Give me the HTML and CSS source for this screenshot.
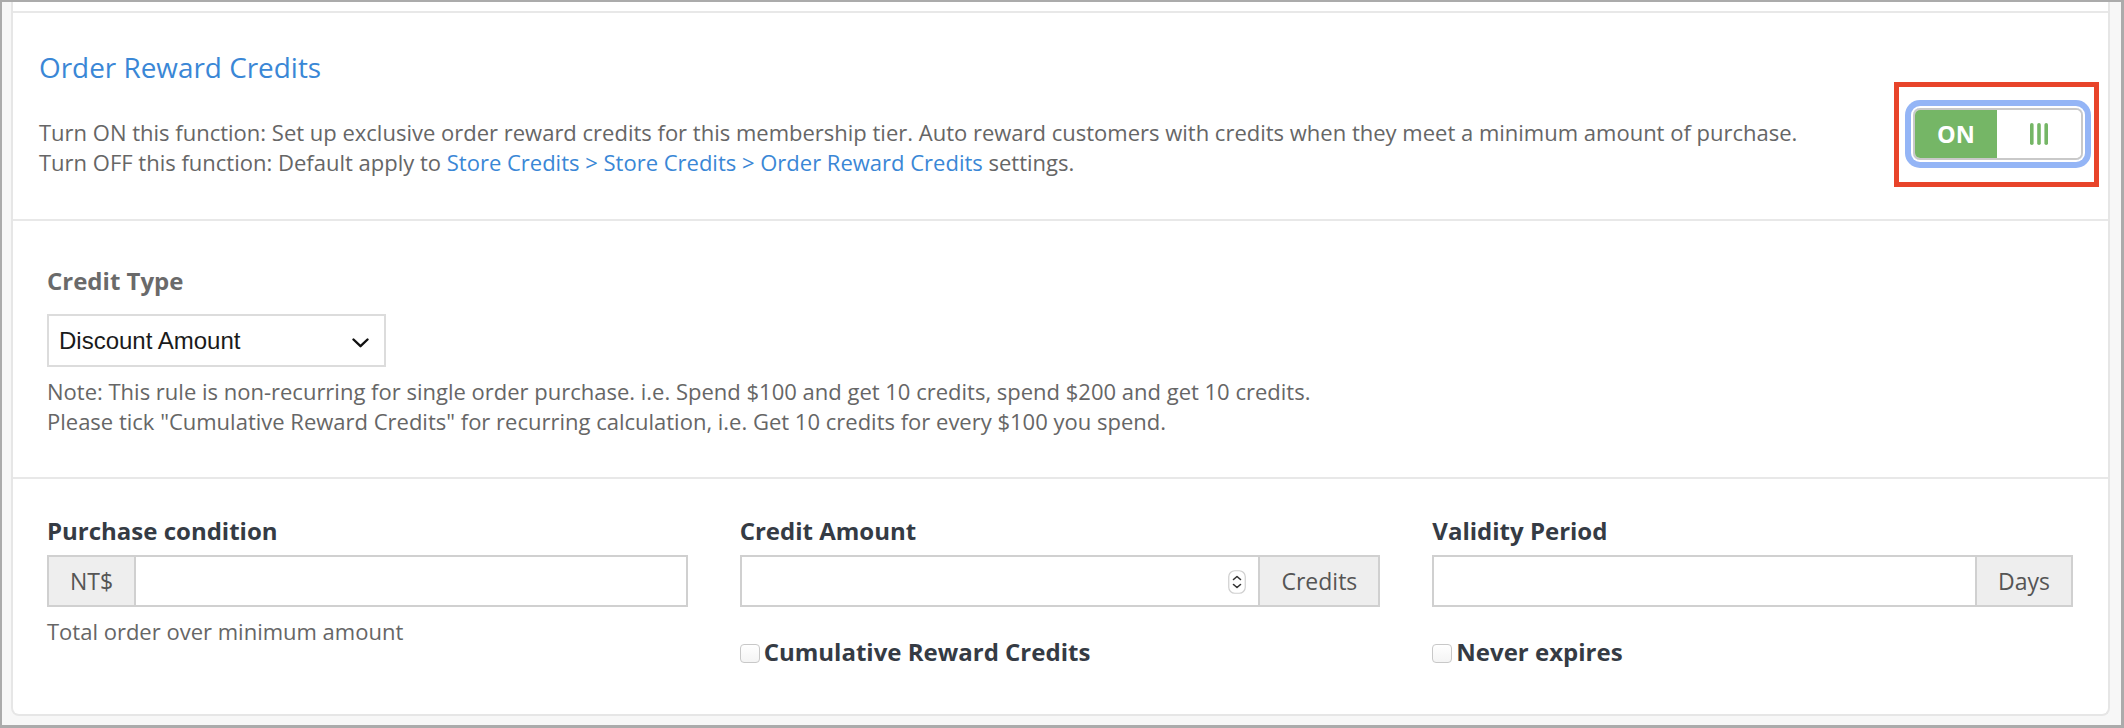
FILE: index.html
```html
<!DOCTYPE html>
<html lang="en">
<head>
<meta charset="utf-8">
<title>Order Reward Credits</title>
<link rel="stylesheet" href="styles.css">
</head>
<body>
<div class="frame">
  <div class="card">
    <section class="sec sec-head">
      <div class="head-text">
        <h2 class="title">Order Reward Credits</h2>
        <p class="desc">Turn ON this function: Set up exclusive order reward credits for this membership tier. Auto reward customers with credits when they meet a minimum amount of purchase.<br>Turn OFF this function: Default apply to <a class="link" href="#">Store Credits &gt; Store Credits &gt; Order Reward Credits</a> settings.</p>
      </div>
      <div class="highlight">
        <div class="toggle">
          <span class="toggle-on">ON</span>
          <span class="toggle-handle">
            <svg class="grip" width="18" height="22" viewBox="0 0 18 22"><rect x="0" y="0" width="3.6" height="22" rx="1.8" fill="#75b666"/><rect x="7.2" y="0" width="3.6" height="22" rx="1.8" fill="#75b666"/><rect x="14.4" y="0" width="3.6" height="22" rx="1.8" fill="#75b666"/></svg>
          </span>
        </div>
      </div>
    </section>

    <section class="sec sec-type">
      <div class="label label-muted">Credit Type</div>
      <div class="select">
        <span class="select-text">Discount Amount</span>
        <svg class="chevron" width="17" height="10" viewBox="0 0 17 10"><path d="M1.5 1.5 L8.5 8.2 L15.5 1.5" fill="none" stroke="#111" stroke-width="2.4" stroke-linecap="round" stroke-linejoin="round"/></svg>
      </div>
      <p class="note">Note: This rule is non-recurring for single order purchase. i.e. Spend $100 and get 10 credits, spend $200 and get 10 credits.<br>Please tick "Cumulative Reward Credits" for recurring calculation, i.e. Get 10 credits for every $100 you spend.</p>
    </section>

    <section class="sec sec-fields">
      <div class="field">
        <div class="label">Purchase condition</div>
        <div class="input-group">
          <span class="addon addon-left">NT$</span>
          <div class="field-box"><input class="input" type="text"></div>
        </div>
        <p class="help">Total order over minimum amount</p>
      </div>
      <div class="field">
        <div class="label">Credit Amount</div>
        <div class="input-group">
          <div class="field-box">
            <input class="input" type="text">
            <svg class="spinner" width="18" height="24" viewBox="0 0 18 24"><rect x="0.75" y="0.75" width="16.5" height="22.5" rx="6" fill="#fff" stroke="#cfcfcf" stroke-width="1.2"/><path d="M5.5 9.5 L9 6.5 L12.5 9.5" fill="none" stroke="#333" stroke-width="1.6" stroke-linecap="round" stroke-linejoin="round"/><path d="M5.5 14.5 L9 17.5 L12.5 14.5" fill="none" stroke="#333" stroke-width="1.6" stroke-linecap="round" stroke-linejoin="round"/></svg>
          </div>
          <span class="addon addon-right">Credits</span>
        </div>
        <label class="check"><input class="checkbox" type="checkbox"><span>Cumulative Reward Credits</span></label>
      </div>
      <div class="field">
        <div class="label">Validity Period</div>
        <div class="input-group">
          <div class="field-box"><input class="input" type="text"></div>
          <span class="addon addon-right">Days</span>
        </div>
        <label class="check"><input class="checkbox" type="checkbox"><span>Never expires</span></label>
      </div>
    </section>
  </div>
</div>
</body>
</html>
```

FILE: styles.css
```css
html, body {
  margin: 0;
  padding: 0;
}

body {
  width: 2124px;
  height: 728px;
  overflow: hidden;
  font-family: "Open Sans", "Noto Sans", sans-serif;
  color: #666;
  background: #f7f7f7;
}

.frame {
  box-sizing: border-box;
  width: 2124px;
  height: 728px;
  border-style: solid;
  border-color: #ababab;
  border-width: 2px 3px 3px 2px;
  background: #f7f7f7;
  padding: 0 11px 9px 9px;
}

.card {
  box-sizing: border-box;
  height: 100%;
  background: #fff;
  border: 2px solid #e6e6e6;
  border-top: 0;
  border-radius: 0 0 8px 8px;
  padding-top: 9px;
}

.sec {
  border-bottom: 2px solid #e8e8e8;
}

/* ---------- header section ---------- */
.sec-head {
  display: flex;
  align-items: flex-start;
  border-top: 2px solid #e8e8e8;
  padding: 38px 9px 0 26px;
}

.head-text {
  flex: 1;
  padding-bottom: 42.5px;
}

.title {
  margin: 0;
  font-size: 27.9px;
  font-weight: 400;
  line-height: 32px;
  color: #3a87d6;
}

.desc {
  margin: 33.5px 0 0;
  font-size: 22px;
  line-height: 30px;
  color: #666;
}

.link {
  color: #3a87d6;
  text-decoration: none;
}

.highlight {
  margin-top: 31px;
  border: 5px solid #e8442a;
  padding: 21px 11px 22px 14px;
}

.toggle {
  box-sizing: border-box;
  display: flex;
  width: 170px;
  height: 52px;
  border: 2px solid #c9c9c9;
  border-radius: 7px;
  overflow: hidden;
  box-shadow: 0 0 0 2px #fff, 0 0 0 8px #94b5f6;
}

.toggle-on {
  width: 82px;
  display: flex;
  align-items: center;
  justify-content: center;
  background: #75b666;
  color: #fff;
  font-size: 23.5px;
  font-weight: 700;
}

.toggle-handle {
  flex: 1;
  display: flex;
  align-items: center;
  justify-content: center;
  background: #fff;
}

/* ---------- credit type section ---------- */
.sec-type {
  padding: 48px 35px 41.5px 34px;
}

.label {
  font-size: 24px;
  font-weight: 700;
  line-height: 23px;
  color: #353b44;
}

.label-muted {
  color: #6a6a6a;
}

.select {
  box-sizing: border-box;
  width: 339px;
  height: 53px;
  margin-top: 22px;
  border: 2px solid #dcdcdc;
  padding: 0 15px 0 10px;
  display: flex;
  align-items: center;
  justify-content: space-between;
  font-family: "Liberation Sans", Arial, sans-serif;
  font-size: 24px;
  color: #1a1a1a;
}

.chevron {
  margin-top: 4px;
}

.note {
  margin: 8.5px 0 0;
  font-size: 22px;
  line-height: 30px;
  color: #666;
}

/* ---------- fields section ---------- */
.sec-fields {
  border-bottom: 0;
  display: grid;
  grid-template-columns: repeat(3, 1fr);
  column-gap: 52px;
  padding: 40px 35px 0 34px;
}

.input-group {
  box-sizing: border-box;
  display: flex;
  height: 52px;
  margin-top: 13px;
  border: 2px solid #d0d0d0;
}

.addon {
  display: flex;
  align-items: center;
  justify-content: center;
  padding: 0 21px;
  background: #eeeeee;
  color: #555;
  font-size: 23px;
}

.addon-left {
  border-right: 2px solid #d0d0d0;
}

.addon-right {
  border-left: 2px solid #d0d0d0;
}

.field-box {
  flex: 1;
  display: flex;
  align-items: center;
  min-width: 0;
}

.input {
  flex: 1;
  min-width: 0;
  height: 100%;
  border: 0;
  outline: 0;
  padding: 0 12px;
  background: transparent;
  font-family: inherit;
  font-size: 22px;
}

.spinner {
  margin-right: 12px;
  margin-top: 1px;
  flex: none;
}

.help {
  margin: 8.5px 0 0;
  font-size: 22px;
  line-height: 30px;
  color: #666;
}

.check {
  display: flex;
  align-items: flex-start;
  margin-top: 33px;
  font-size: 24px;
  font-weight: 700;
  line-height: 23px;
  color: #353b44;
}

.checkbox {
  appearance: none;
  -webkit-appearance: none;
  box-sizing: border-box;
  width: 20px;
  height: 19px;
  margin: 4px 4px 0 0;
  border: 1px solid #c8c8c8;
  border-radius: 4px;
  background: linear-gradient(#ffffff, #f4f4f4);
  flex: none;
}
```
